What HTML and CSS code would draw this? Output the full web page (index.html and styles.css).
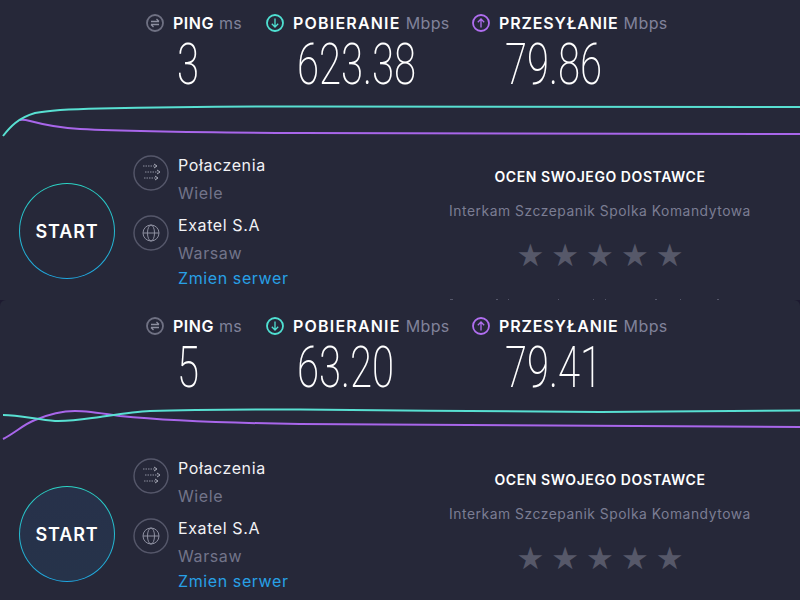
FILE: index.html
```html
<!DOCTYPE html>
<html lang="pl">
<head>
    <meta charset="UTF-8">
    <title>Speedtest</title>
    <link rel="stylesheet" href="styles.css">
</head>
<body>
    <section class="panel">
        <div class="stats">
            <div class="stat stat-ping">
                <div class="stat-head">
                    <svg class="stat-icon" viewBox="0 0 18 18"><circle cx="9" cy="9" r="8" stroke="#6f7183"/><path d="M5 7.500h8M10.500 5l2.500 2.500M13 10.500H5M7.500 13L5 10.500" stroke="#8d8fa0"/></svg>
                    <span class="stat-name">PING</span> <span class="stat-unit">ms</span>
                </div>
                <div class="stat-value">3</div>
            </div>
            <div class="stat stat-down">
                <div class="stat-head">
                    <svg class="stat-icon" viewBox="0 0 18 18"><circle cx="9" cy="9" r="8" stroke="#4fe0d2"/><path d="M9 4.500v8.500M5.800 9.800 9 13l3.200-3.200" stroke="#4fe0d2"/></svg>
                    <span class="stat-name">POBIERANIE</span> <span class="stat-unit">Mbps</span>
                </div>
                <div class="stat-value">623.38</div>
            </div>
            <div class="stat stat-up">
                <div class="stat-head">
                    <svg class="stat-icon" viewBox="0 0 18 18"><circle cx="9" cy="9" r="8" stroke="#b06ef0"/><path d="M9 13.500V5M5.800 8.200 9 5l3.200 3.200" stroke="#b06ef0"/></svg>
                    <span class="stat-name">PRZESYŁANIE</span> <span class="stat-unit">Mbps</span>
                </div>
                <div class="stat-value">79.86</div>
            </div>
        </div>

        <svg class="graph" viewBox="0 0 800 42">
            <path class="line-up" d="M20 16C23 15.500 26 16 30 17C45 21 60 24 80 25C140 28 200 28.500 300 29L800 30"/>
            <path class="line-down" d="M3 32C10 23 18 14 35 9C50 6 75 5 100 4.500C170 3 230 2.500 300 2.500L800 3"/>
        </svg>

        <div class="bottom">
            <button class="start">START</button>
            <div class="info">
                <div class="info-row">
                    <svg class="info-icon" viewBox="0 0 36 36"><circle cx="18" cy="18" r="17" stroke="#55576a" stroke-width="1.400"/><path d="M10 11h13M12 17h13M11 23h13" stroke="#8d8fa0" stroke-dasharray="1.500 1"/><path d="M21 9l3 2-3 2M24 15l3 2-3 2M22 21l3 2-3 2" stroke="#a9abb8"/></svg>
                    <div>
                        <div class="info-title">Połaczenia</div>
                        <div class="info-sub">Wiele</div>
                    </div>
                </div>
                <div class="info-row">
                    <svg class="info-icon" viewBox="0 0 36 36"><circle cx="18" cy="18" r="17" stroke="#55576a" stroke-width="1.400"/><circle cx="18" cy="18" r="8" stroke="#8d8fa0"/><ellipse cx="18" cy="18" rx="3.500" ry="8" stroke="#8d8fa0"/><path d="M10 18h16" stroke="#8d8fa0"/></svg>
                    <div>
                        <div class="info-title">Exatel S.A</div>
                        <div class="info-sub">Warsaw</div>
                        <a class="info-link">Zmien serwer</a>
                    </div>
                </div>
            </div>
            <div class="rate">
                <div class="rate-title">OCEN SWOJEGO DOSTAWCE</div>
                <div class="rate-isp">Interkam Szczepanik Spolka Komandytowa</div>
                <div class="stars">★★★★★</div>
                <svg class="specks" viewBox="0 0 320 1"><path d="M10 .5h3M56 .5h2M68 .5h1M118 .5h1M153 .5h1M165 .5h1M215 .5h2M240 .5h1M277 .5h2"/></svg>
            </div>
        </div>
    </section>

    <section class="panel panel-second">
        <div class="stats">
            <div class="stat stat-ping">
                <div class="stat-head">
                    <svg class="stat-icon" viewBox="0 0 18 18"><circle cx="9" cy="9" r="8" stroke="#6f7183"/><path d="M5 7.500h8M10.500 5l2.500 2.500M13 10.500H5M7.500 13L5 10.500" stroke="#8d8fa0"/></svg>
                    <span class="stat-name">PING</span> <span class="stat-unit">ms</span>
                </div>
                <div class="stat-value">5</div>
            </div>
            <div class="stat stat-down">
                <div class="stat-head">
                    <svg class="stat-icon" viewBox="0 0 18 18"><circle cx="9" cy="9" r="8" stroke="#4fe0d2"/><path d="M9 4.500v8.500M5.800 9.800 9 13l3.200-3.200" stroke="#4fe0d2"/></svg>
                    <span class="stat-name">POBIERANIE</span> <span class="stat-unit">Mbps</span>
                </div>
                <div class="stat-value">63.20</div>
            </div>
            <div class="stat stat-up">
                <div class="stat-head">
                    <svg class="stat-icon" viewBox="0 0 18 18"><circle cx="9" cy="9" r="8" stroke="#b06ef0"/><path d="M9 13.500V5M5.800 8.200 9 5l3.200 3.200" stroke="#b06ef0"/></svg>
                    <span class="stat-name">PRZESYŁANIE</span> <span class="stat-unit">Mbps</span>
                </div>
                <div class="stat-value">79.41</div>
            </div>
        </div>

        <svg class="graph" viewBox="0 0 800 42">
            <path class="line-up" d="M3 32C15 26 24 17 35 13C47 8 60 4 75 4C88 4 100 6 120 9C170 14 230 16 300 17L800 20"/>
            <path class="line-down" d="M3 8C20 8 38 13 55 14C72 14.500 85 12 100 10C120 7 135 4.500 150 4C200 2.500 250 2.500 300 2.500C400 3 500 5 600 5C670 5 740 4 800 3.500"/>
        </svg>

        <div class="bottom">
            <button class="start start-hover">START</button>
            <div class="info">
                <div class="info-row">
                    <svg class="info-icon" viewBox="0 0 36 36"><circle cx="18" cy="18" r="17" stroke="#55576a" stroke-width="1.400"/><path d="M10 11h13M12 17h13M11 23h13" stroke="#8d8fa0" stroke-dasharray="1.500 1"/><path d="M21 9l3 2-3 2M24 15l3 2-3 2M22 21l3 2-3 2" stroke="#a9abb8"/></svg>
                    <div>
                        <div class="info-title">Połaczenia</div>
                        <div class="info-sub">Wiele</div>
                    </div>
                </div>
                <div class="info-row">
                    <svg class="info-icon" viewBox="0 0 36 36"><circle cx="18" cy="18" r="17" stroke="#55576a" stroke-width="1.400"/><circle cx="18" cy="18" r="8" stroke="#8d8fa0"/><ellipse cx="18" cy="18" rx="3.500" ry="8" stroke="#8d8fa0"/><path d="M10 18h16" stroke="#8d8fa0"/></svg>
                    <div>
                        <div class="info-title">Exatel S.A</div>
                        <div class="info-sub">Warsaw</div>
                        <a class="info-link">Zmien serwer</a>
                    </div>
                </div>
            </div>
            <div class="rate">
                <div class="rate-title">OCEN SWOJEGO DOSTAWCE</div>
                <div class="rate-isp">Interkam Szczepanik Spolka Komandytowa</div>
                <div class="stars">★★★★★</div>
            </div>
        </div>
    </section>
</body>
</html>
```

FILE: styles.css
```css
html, body { margin: 0; padding: 0; }
body { width: 800px; height: 600px; overflow: hidden; background: #1d1a30; font-family: "Inter", "Open Sans", sans-serif; color: #fff; }
svg { fill: none; }

.panel { height: 300px; box-sizing: border-box; background: #262839; overflow: hidden; }
.panel-second { padding-top: 3px; border-radius: 6px 6px 0 0; }

.stats { display: flex; height: 104px; padding: 12px 0 0 146px; box-sizing: border-box; }
.stat { flex: none; }
.stat-ping { width: 120px; }
.stat-down { width: 206px; }
.stat-head { display: flex; align-items: center; height: 22px; font-size: 16px; white-space: nowrap; }
.stat-icon { width: 18px; height: 18px; margin-right: 9px; stroke-width: 1.8; }
.stat-icon path { stroke-width: 1.3; }
.stat-name { font-weight: 600; margin-right: 5px; }
.stat-ping .stat-name { letter-spacing: .5px; }
.stat-down .stat-name { letter-spacing: 1.2px; }
.stat-up .stat-name { letter-spacing: .85px; }
.stat-unit { color: #80829a; letter-spacing: .4px; }
.stat-value { width: 200px; margin-left: 31px; font-family: "Roboto", sans-serif; font-size: 58px; font-weight: 200; line-height: 60px; white-space: nowrap; transform: scaleX(.69); transform-origin: left center; }
.stat-up .stat-value { margin-left: 33px; }

.graph { display: block; width: 800px; height: 42px; }
.graph path { fill: none; stroke-width: 2; }
.line-up { stroke: #a866ea; }
.line-down { stroke: #58e0d2; }

.bottom { display: flex; height: 154px; }
.start { flex: none; width: 96px; height: 96px; margin: 37px 0 0 19px; padding: 0; box-sizing: border-box; border-radius: 50%; border: 1.5px solid transparent; background: linear-gradient(#262839, #262839) padding-box, linear-gradient(#2bd4c4, #1fa6e0) border-box; color: #fff; font: 600 18px "Inter", sans-serif; letter-spacing: .9px; }
.start-hover { background: linear-gradient(#27314a, #26334a) padding-box, linear-gradient(#2bd4c4, #1fa6e0) border-box; }

.info { flex: none; width: 307px; margin: 5px 0 0 18px; letter-spacing: .6px; }
.info-row { display: flex; }
.info-row + .info-row { margin-top: 4px; }
.info-icon { flex: none; width: 36px; height: 36px; margin: 4px 9px 0 0; }
.info-icon path, .info-icon ellipse { stroke-width: 1; }
.info-title { font-size: 16px; line-height: 28px; color: #f2f2f5; }
.info-sub { font-size: 16px; line-height: 28px; color: #72748a; }
.info-link { display: block; font-size: 16px; line-height: 22px; color: #28a0e6; }

.rate { display: flex; flex-direction: column; flex: none; width: 320px; text-align: center; }
.rate-title { font-size: 14px; font-weight: 600; line-height: 20px; margin-top: 21px; letter-spacing: .57px; white-space: nowrap; }
.rate-isp { font-size: 13.85px; line-height: 20px; margin-top: 14px; letter-spacing: .53px; color: #7b7d93; white-space: nowrap; }
.stars { font-family: "DejaVu Sans", sans-serif; font-size: 31px; line-height: 32px; margin-top: 18px; color: #565869; letter-spacing: 7px; text-indent: 7px; }
.specks { display: block; width: 320px; height: 1px; margin-top: auto; flex: none; }
.specks path { stroke: #55576a; stroke-width: 1; }
```
